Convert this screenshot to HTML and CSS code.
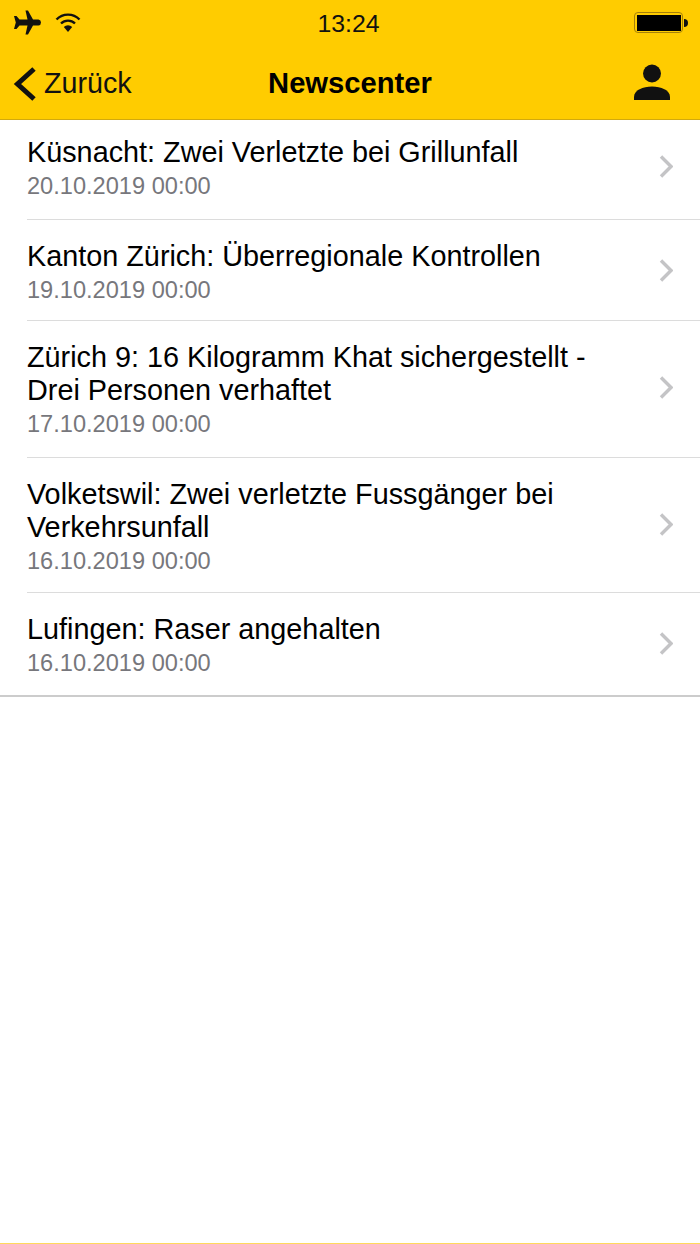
FILE: index.html
```html
<!DOCTYPE html>
<html lang="de">
<head>
    <meta charset="UTF-8">
    <meta name="viewport" content="width=device-width, initial-scale=1.0">
    <title>Newscenter</title>
    <link rel="stylesheet" href="styles.css">
</head>
<body>
    <div class="phone">
        <header class="header">
            <div class="statusbar">
                <div class="status-left">
                    <svg class="icon-plane" width="28" height="26" viewBox="0 0 28 26">
                        <path d="M12.500 0.500 L15 0.500 L20 9.500 L25.500 9.500 Q28 10 28 12.500 Q28 15 25.500 15.500 L20 15.500 L15 24.500 L12.500 24.500 L14.500 15.500 L6.500 15.500 L3.500 19 L1 19 L2.800 12.500 L1 6 L3.500 6 L6.500 9.500 L14.500 9.500 Z" fill="#111"/>
                    </svg>
                    <svg class="icon-wifi" width="26" height="20" viewBox="0 0 26 20">
                        <path d="M1.500 6.500 A16 16 0 0 1 24.500 6.500" fill="none" stroke="#111" stroke-width="2.400"/>
                        <path d="M6 10.500 A10 10 0 0 1 20 10.500" fill="none" stroke="#111" stroke-width="2.400"/>
                        <path d="M8.800 14 A6 6 0 0 1 17.200 14 L13 19 Z" fill="#111"/>
                    </svg>
                </div>
                <div class="clock">13:24</div>
                <div class="battery">
                    <div class="battery-body"><div class="battery-fill"></div></div>
                    <div class="battery-tip"></div>
                </div>
            </div>
            <div class="navbar">
                <a class="back">
                    <svg width="24" height="36" viewBox="0 0 24 36">
                        <path d="M21 3 L4.500 18 L21 33" fill="none" stroke="#111" stroke-width="5"/>
                    </svg>
                    <span>Zurück</span>
                </a>
                <h1 class="title">Newscenter</h1>
                <svg class="icon-user" width="38" height="36" viewBox="0 0 38 36">
                    <circle cx="19" cy="9.500" r="9" fill="#111"/>
                    <path d="M1 36 L1 33 C1 26 10 22.500 19 22.500 C28 22.500 37 26 37 33 L37 36 Z" fill="#111"/>
                </svg>
            </div>
        </header>

        <ul class="list">
            <li class="item">
                <div class="item-text">
                    <p class="item-title">Küsnacht: Zwei Verletzte bei Grillunfall</p>
                    <p class="item-date">20.10.2019 00:00</p>
                </div>
                <svg class="chevron" width="14" height="25" viewBox="0 0 14 25"><path d="M2 2.500 L12 12.500 L2 22.500" fill="none" stroke="#c4c4c6" stroke-width="3.400"/></svg>
            </li>
            <li class="item">
                <div class="item-text">
                    <p class="item-title">Kanton Zürich: Überregionale Kontrollen</p>
                    <p class="item-date">19.10.2019 00:00</p>
                </div>
                <svg class="chevron" width="14" height="25" viewBox="0 0 14 25"><path d="M2 2.500 L12 12.500 L2 22.500" fill="none" stroke="#c4c4c6" stroke-width="3.400"/></svg>
            </li>
            <li class="item">
                <div class="item-text">
                    <p class="item-title">Zürich 9: 16 Kilogramm Khat sichergestellt - Drei Personen verhaftet</p>
                    <p class="item-date">17.10.2019 00:00</p>
                </div>
                <svg class="chevron" width="14" height="25" viewBox="0 0 14 25"><path d="M2 2.500 L12 12.500 L2 22.500" fill="none" stroke="#c4c4c6" stroke-width="3.400"/></svg>
            </li>
            <li class="item">
                <div class="item-text">
                    <p class="item-title">Volketswil: Zwei verletzte Fussgänger bei Verkehrsunfall</p>
                    <p class="item-date">16.10.2019 00:00</p>
                </div>
                <svg class="chevron" width="14" height="25" viewBox="0 0 14 25"><path d="M2 2.500 L12 12.500 L2 22.500" fill="none" stroke="#c4c4c6" stroke-width="3.400"/></svg>
            </li>
            <li class="item">
                <div class="item-text">
                    <p class="item-title">Lufingen: Raser angehalten</p>
                    <p class="item-date">16.10.2019 00:00</p>
                </div>
                <svg class="chevron" width="14" height="25" viewBox="0 0 14 25"><path d="M2 2.500 L12 12.500 L2 22.500" fill="none" stroke="#c4c4c6" stroke-width="3.400"/></svg>
            </li>
        </ul>
    </div>
</body>
</html>
```

FILE: styles.css
```css
* {
    box-sizing: border-box;
}
html, body {
    margin: 0;
    padding: 0;
    height: 100%;
}
body {
    font-family: "Liberation Sans", Arial, sans-serif;
    background-color: #fff;
    color: #000;
}
.phone {
    height: 1244px;
    border-bottom: 1px solid #ffd95c;
}
.header {
    height: 120px;
    background-color: #ffcc00;
    border-bottom: 1px solid #d2a90e;
}
.statusbar {
    height: 45px;
    padding: 0 12px 0 13px;
    display: grid;
    grid-template-columns: 1fr auto 1fr;
    align-items: center;
}
.status-left {
    display: flex;
    align-items: center;
    gap: 14px;
}
.clock {
    font-size: 24.800px;
    color: #111;
    padding: 2px 4px 0 0;
}
.battery {
    display: flex;
    align-items: center;
    justify-content: flex-end;
}
.battery-body {
    width: 49px;
    height: 21px;
    border: 1.500px solid #a5800c;
    border-radius: 4px;
    padding: 1.500px;
}
.battery-fill {
    height: 100%;
    background-color: #000;
}
.battery-tip {
    width: 4px;
    height: 8px;
    background-color: #111;
    border-radius: 0 4px 4px 0;
    margin-left: 1px;
}
.navbar {
    height: 74px;
    display: grid;
    grid-template-columns: 1fr auto 1fr;
    align-items: center;
    padding: 3px 13px 0 13px;
}
.back {
    display: flex;
    align-items: center;
    gap: 7px;
    font-size: 28.700px;
    color: #111;
}
.title {
    margin: 0;
    font-size: 29.200px;
    font-weight: bold;
    color: #000;
}
.icon-user {
    justify-self: end;
    margin: 0 16px 3px 0;
}
.list {
    list-style: none;
    margin: 0;
    padding: 0;
    border-bottom: 2px solid #ccc;
}
.item {
    display: flex;
    align-items: center;
    justify-content: space-between;
    padding: 21px 27px 14px 27px;
    position: relative;
}
.item + .item::before {
    content: "";
    position: absolute;
    top: 0;
    left: 27px;
    right: 0;
    height: 1px;
    background-color: #dcdcdc;
}
.item:nth-child(1) {
    padding-top: 16px;
    padding-bottom: 16px;
}
.item:nth-child(2) {
    padding-bottom: 13px;
}
.item:nth-child(3) {
    padding-bottom: 16px;
}
.item:nth-child(5) {
    padding-bottom: 15px;
}
.item-text {
    width: 580px;
}
.item-title {
    margin: 0;
    font-size: 28.800px;
    line-height: 33px;
}
.item-date {
    margin: 0;
    font-size: 23.600px;
    line-height: 34px;
    color: #77777c;
}
.chevron {
    margin-bottom: 7px;
}
```
